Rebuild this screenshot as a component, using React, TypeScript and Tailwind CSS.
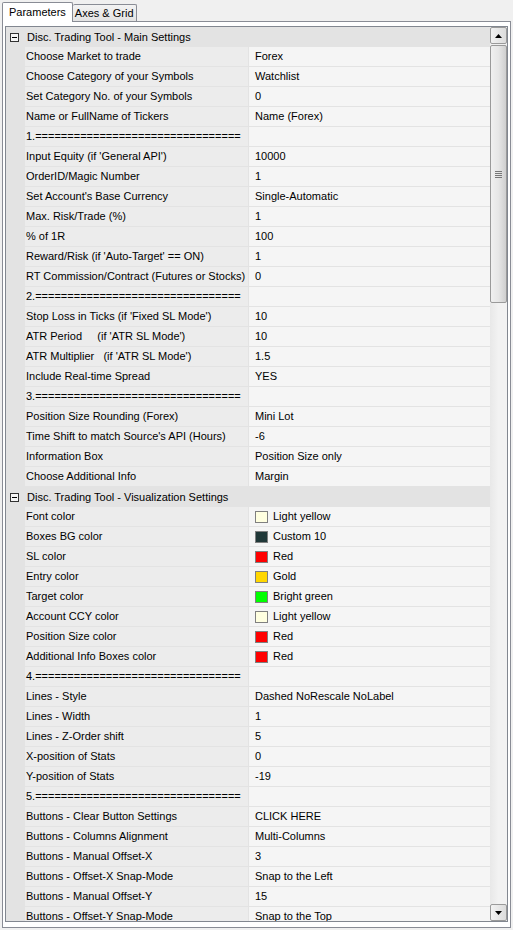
import React from 'react';

type Row =
  | { kind: 'cat'; label: string }
  | { kind: 'prop'; label: string; value?: string; swatch?: string };

const sep = (n: number) => ({ kind: 'prop' as const, label: `${n}.${'='.repeat(32)}`, value: '' });

const rows: Row[] = [
  { kind: 'cat', label: 'Disc. Trading Tool - Main Settings' },
  { kind: 'prop', label: 'Choose Market to trade', value: 'Forex' },
  { kind: 'prop', label: 'Choose Category of your Symbols', value: 'Watchlist' },
  { kind: 'prop', label: 'Set Category No. of your Symbols', value: '0' },
  { kind: 'prop', label: 'Name or FullName of Tickers', value: 'Name (Forex)' },
  sep(1),
  { kind: 'prop', label: "Input Equity (if 'General API')", value: '10000' },
  { kind: 'prop', label: 'OrderID/Magic Number', value: '1' },
  { kind: 'prop', label: "Set Account's Base Currency", value: 'Single-Automatic' },
  { kind: 'prop', label: 'Max. Risk/Trade (%)', value: '1' },
  { kind: 'prop', label: '% of 1R', value: '100' },
  { kind: 'prop', label: "Reward/Risk (if 'Auto-Target' == ON)", value: '1' },
  { kind: 'prop', label: 'RT Commission/Contract (Futures or Stocks)', value: '0' },
  sep(2),
  { kind: 'prop', label: "Stop Loss in Ticks (if 'Fixed SL Mode')", value: '10' },
  { kind: 'prop', label: "ATR Period     (if 'ATR SL Mode')", value: '10' },
  { kind: 'prop', label: "ATR Multiplier   (if 'ATR SL Mode')", value: '1.5' },
  { kind: 'prop', label: 'Include Real-time Spread', value: 'YES' },
  sep(3),
  { kind: 'prop', label: 'Position Size Rounding (Forex)', value: 'Mini Lot' },
  { kind: 'prop', label: "Time Shift to match Source's API (Hours)", value: '-6' },
  { kind: 'prop', label: 'Information Box', value: 'Position Size only' },
  { kind: 'prop', label: 'Choose Additional Info', value: 'Margin' },
  { kind: 'cat', label: 'Disc. Trading Tool - Visualization Settings' },
  { kind: 'prop', label: 'Font color', value: 'Light yellow', swatch: '#ffffe0' },
  { kind: 'prop', label: 'Boxes BG color', value: 'Custom 10', swatch: '#203838' },
  { kind: 'prop', label: 'SL color', value: 'Red', swatch: '#ff0000' },
  { kind: 'prop', label: 'Entry color', value: 'Gold', swatch: '#ffd700' },
  { kind: 'prop', label: 'Target color', value: 'Bright green', swatch: '#00ff00' },
  { kind: 'prop', label: 'Account CCY color', value: 'Light yellow', swatch: '#ffffe0' },
  { kind: 'prop', label: 'Position Size color', value: 'Red', swatch: '#ff0000' },
  { kind: 'prop', label: 'Additional Info Boxes color', value: 'Red', swatch: '#ff0000' },
  sep(4),
  { kind: 'prop', label: 'Lines - Style', value: 'Dashed NoRescale NoLabel' },
  { kind: 'prop', label: 'Lines - Width', value: '1' },
  { kind: 'prop', label: 'Lines - Z-Order shift', value: '5' },
  { kind: 'prop', label: 'X-position of Stats', value: '0' },
  { kind: 'prop', label: 'Y-position of Stats', value: '-19' },
  sep(5),
  { kind: 'prop', label: 'Buttons - Clear Button Settings', value: 'CLICK HERE' },
  { kind: 'prop', label: 'Buttons - Columns Alignment', value: 'Multi-Columns' },
  { kind: 'prop', label: 'Buttons - Manual Offset-X', value: '3' },
  { kind: 'prop', label: 'Buttons - Offset-X Snap-Mode', value: 'Snap to the Left' },
  { kind: 'prop', label: 'Buttons - Manual Offset-Y', value: '15' },
  { kind: 'prop', label: 'Buttons - Offset-Y Snap-Mode', value: 'Snap to the Top' },
];

function MinusBox() {
  return (
    <div className="flex h-[9px] w-[9px] items-center justify-center border border-[#333] bg-[#f6f6f6]">
      <div className="h-px w-[5px] bg-black" />
    </div>
  );
}

function Arrow({ up }: { up?: boolean }) {
  return (
    <svg width="7" height="4" viewBox="0 0 7 4">
      <path d={up ? 'M0 4 L3.5 0 L7 4 Z' : 'M0 0 L3.5 4 L7 0 Z'} fill="#000" />
    </svg>
  );
}

function ScrollBar() {
  return (
    <div className="flex w-[17px] shrink-0 flex-col bg-[#f0f0f0]">
      <div className="flex h-[17px] shrink-0 items-center justify-center rounded-[2px] border border-[#9a9a9a] bg-gradient-to-r from-[#f2f2f2] to-[#dcdcdc]">
        <Arrow up />
      </div>
      <div className="mt-px flex h-[258px] shrink-0 items-center justify-center rounded-[2px] border border-[#9a9a9a] bg-gradient-to-r from-[#f0f0f0] via-[#e6e6e6] to-[#cfcfcf]">
        <div className="flex flex-col gap-px">
          <div className="h-px w-[7px] bg-[#777]" />
          <div className="h-px w-[7px] bg-[#777]" />
          <div className="h-px w-[7px] bg-[#777]" />
          <div className="h-px w-[7px] bg-[#777]" />
        </div>
      </div>
      <div className="flex-1 bg-gradient-to-r from-[#e8e8e8] via-[#f2f2f2] to-[#f2f2f2]" />
      <div className="flex h-[17px] shrink-0 items-center justify-center rounded-[2px] border border-[#9a9a9a] bg-gradient-to-r from-[#f2f2f2] to-[#dcdcdc]">
        <Arrow />
      </div>
    </div>
  );
}

function GridRow({ row }: { row: Row }) {
  if (row.kind === 'cat') {
    return (
      <div className="flex h-[20px] shrink-0 items-center bg-[#e3e3e3]">
        <div className="ml-[4px] mr-[8px]">
          <MinusBox />
        </div>
        <span className="whitespace-pre">{row.label}</span>
      </div>
    );
  }
  return (
    <div className="flex h-[20px] shrink-0">
      <div className="w-[19px] shrink-0 bg-[#e3e3e3]" />
      <div className="flex w-[223px] shrink-0 items-center border-b border-[#e3e3e3] bg-[#ececec] pl-[1px]">
        <span className="whitespace-pre">{row.label}</span>
      </div>
      <div className="flex flex-1 items-center border-b border-l border-[#e3e3e3] bg-[#f5f5f5] pl-[6px]">
        {row.swatch && (
          <div className="mr-[5px] h-[12px] w-[13px] border border-[#808080]" style={{ backgroundColor: row.swatch }} />
        )}
        <span className="whitespace-pre">{row.value}</span>
      </div>
    </div>
  );
}

export default function App() {
  return (
    <div className="h-[930px] w-[513px] overflow-hidden bg-[#f0f0f0] font-['Liberation_Sans',Arial,sans-serif] text-[11px] leading-none text-black">
      <div className="flex h-[21px] items-end pl-[2px]">
        <div className="relative z-10 -mb-px flex h-[20px] items-center rounded-t-[2px] border border-b-0 border-[#898c95] bg-white px-[6px] pb-[1px]">
          Parameters
        </div>
        <div className="flex h-[17px] items-center rounded-t-[2px] border border-b-0 border-l-0 border-[#898c95] bg-gradient-to-b from-[#f3f3f3] to-[#e3e3e3] px-[2px] pt-[1px]">
          Axes &amp; Grid
        </div>
      </div>
      <div className="mx-[2px] h-[907px] w-[509px] border border-[#898c95] bg-white px-[2px] pb-[5px] pt-[4px]">
        <div className="flex h-full border border-[#828790] bg-[#ececec]">
          <div className="flex flex-1 flex-col overflow-hidden">
            {rows.map((r, i) => (
              <GridRow key={i} row={r} />
            ))}
          </div>
          <ScrollBar />
        </div>
      </div>
    </div>
  );
}
